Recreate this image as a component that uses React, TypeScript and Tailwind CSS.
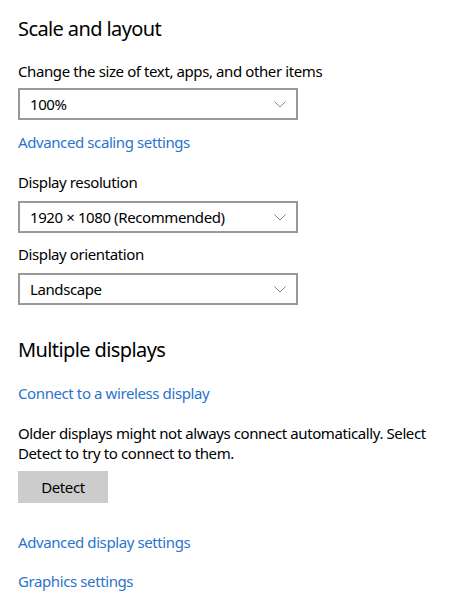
import React from 'react';

const font = { fontFamily: '"Segoe UI", "Noto Sans", "Open Sans", sans-serif' };

function Chevron() {
  return (
    <svg width="12" height="7" viewBox="0 0 12 7" className="shrink-0">
      <path d="M0.5 0.5 L6 6 L11.5 0.5" fill="none" stroke="#8a8a8a" strokeWidth="1" />
    </svg>
  );
}

function Dropdown({ value }: { value: string }) {
  return (
    <div className="w-[280px] h-8 border-2 border-[#999999] flex items-center justify-between pl-[10px] pr-[10px] bg-white">
      <span className="text-[15px] leading-5 text-black tracking-[-0.4px]">{value}</span>
      <Chevron />
    </div>
  );
}

function Link({ children, className = '' }: { children: React.ReactNode; className?: string }) {
  return (
    <a className={`block text-[15px] leading-5 tracking-[-0.4px] text-[#2a73cc] cursor-pointer ${className}`}>
      {children}
    </a>
  );
}

export default function App() {
  return (
    <div className="w-[463px] h-[604px] bg-white pl-[18px] pt-[15px] text-black overflow-hidden" style={font}>
      <h2 className="text-[20px] leading-7 font-normal tracking-[-0.6px]">Scale and layout</h2>

      <div className="mt-[18px] text-[15px] leading-5 tracking-[-0.4px]">Change the size of text, apps, and other items</div>
      <div className="mt-[7px]">
        <Dropdown value="100%" />
      </div>
      <Link className="mt-[12px]">Advanced scaling settings</Link>

      <div className="mt-[20px] text-[15px] leading-5 tracking-[-0.4px]">Display resolution</div>
      <div className="mt-[9px]">
        <Dropdown value="1920 × 1080 (Recommended)" />
      </div>

      <div className="mt-[11px] text-[15px] leading-5 tracking-[-0.4px]">Display orientation</div>
      <div className="mt-[9px]">
        <Dropdown value="Landscape" />
      </div>

      <h2 className="mt-[31px] text-[20px] leading-7 font-normal tracking-[-0.6px]">Multiple displays</h2>
      <Link className="mt-[19px]">Connect to a wireless display</Link>

      <p className="mt-[20px] text-[15px] leading-5 w-[430px] tracking-[-0.4px]">
        Older displays might not always connect automatically. Select Detect to try to connect to them.
      </p>
      <button className="mt-[8px] w-[90px] h-8 bg-[#cccccc] text-[15px] text-black tracking-[-0.4px]">Detect</button>

      <Link className="mt-[29px]">Advanced display settings</Link>
      <Link className="mt-[19px]">Graphics settings</Link>
    </div>
  );
}
